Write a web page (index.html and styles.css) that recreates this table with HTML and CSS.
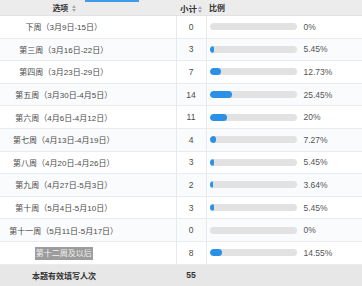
FILE: index.html
```html
<!DOCTYPE html>
<html>
<head>
<meta charset="utf-8">
<link rel="stylesheet" href="styles.css">
</head>
<body>
<div class="topmark"></div>
<table class="tbl">
  <thead>
    <tr class="head">
      <th class="c1">选项 <svg class="sort" width="4" height="7" viewBox="0 0 4 7"><path d="M0 3 L2 0 L4 3 Z M0 4 L2 7 L4 4 Z" fill="#aaa"/></svg></th>
      <th class="c2">小计<svg class="sort" width="4" height="7" viewBox="0 0 4 7"><path d="M0 3 L2 0 L4 3 Z M0 4 L2 7 L4 4 Z" fill="#aaa"/></svg></th>
      <th class="c3">比例</th>
    </tr>
  </thead>
  <tbody>
    <tr><td class="c1">下周（3月9日-15日）</td><td class="c2">0</td><td class="c3"><div class="cell"><div class="bar"><div class="fill" style="width:0%"></div></div><span class="pct">0%</span></div></td></tr>
    <tr><td class="c1">第三周（3月16日-22日）</td><td class="c2">3</td><td class="c3"><div class="cell"><div class="bar"><div class="fill" style="width:5.45%"></div></div><span class="pct">5.45%</span></div></td></tr>
    <tr><td class="c1">第四周（3月23日-29日）</td><td class="c2">7</td><td class="c3"><div class="cell"><div class="bar"><div class="fill" style="width:12.73%"></div></div><span class="pct">12.73%</span></div></td></tr>
    <tr><td class="c1">第五周（3月30日-4月5日）</td><td class="c2">14</td><td class="c3"><div class="cell"><div class="bar"><div class="fill" style="width:25.45%"></div></div><span class="pct">25.45%</span></div></td></tr>
    <tr><td class="c1">第六周（4月6日-4月12日）</td><td class="c2">11</td><td class="c3"><div class="cell"><div class="bar"><div class="fill" style="width:20%"></div></div><span class="pct">20%</span></div></td></tr>
    <tr><td class="c1">第七周（4月13日-4月19日）</td><td class="c2">4</td><td class="c3"><div class="cell"><div class="bar"><div class="fill" style="width:7.27%"></div></div><span class="pct">7.27%</span></div></td></tr>
    <tr><td class="c1">第八周（4月20日-4月26日）</td><td class="c2">3</td><td class="c3"><div class="cell"><div class="bar"><div class="fill" style="width:5.45%"></div></div><span class="pct">5.45%</span></div></td></tr>
    <tr><td class="c1">第九周（4月27日-5月3日）</td><td class="c2">2</td><td class="c3"><div class="cell"><div class="bar"><div class="fill" style="width:3.64%"></div></div><span class="pct">3.64%</span></div></td></tr>
    <tr><td class="c1">第十周（5月4日-5月10日）</td><td class="c2">3</td><td class="c3"><div class="cell"><div class="bar"><div class="fill" style="width:5.45%"></div></div><span class="pct">5.45%</span></div></td></tr>
    <tr><td class="c1">第十一周（5月11日-5月17日）</td><td class="c2">0</td><td class="c3"><div class="cell"><div class="bar"><div class="fill" style="width:0%"></div></div><span class="pct">0%</span></div></td></tr>
    <tr><td class="c1"><span class="sel">第十二周及以后</span></td><td class="c2">8</td><td class="c3"><div class="cell"><div class="bar"><div class="fill" style="width:14.55%"></div></div><span class="pct">14.55%</span></div></td></tr>
  </tbody>
  <tfoot>
    <tr class="foot"><td class="c1">本题有效填写人次</td><td class="c2">55</td><td class="c3"></td></tr>
  </tfoot>
</table>
</body>
</html>
```
FILE: styles.css
```css
html, body {
  margin: 0;
  padding: 0;
  background: #ffffff;
}
body {
  width: 362px;
  height: 286px;
  overflow: hidden;
  position: relative;
  font-family: "Liberation Sans", "Noto Sans CJK SC", sans-serif;
  color: #4a4a4a;
  font-size: 8px;
}
.topmark {
  position: absolute;
  left: 85px;
  top: 0;
  width: 54px;
  height: 2px;
  background: #3d9be9;
  z-index: 2;
}
.tbl {
  width: 410px;
  margin-left: -48px;
  border-collapse: collapse;
  table-layout: fixed;
}
.tbl td, .tbl th {
  padding: 0;
  border-bottom: 1px solid #e9ecef;
}
.c1 { width: 224px; text-align: center; border-right: 1px solid #e6eaf0; }
.c2 { width: 30px; text-align: center; border-right: 1px solid #e6eaf0; font-size: 8.5px; }
.c3 { text-align: left; }
.head th {
  height: 15px;
  background: #ececec;
  font-weight: bold;
  color: #333;
  border-right: none;
  border-bottom: 1px solid #e2e2e2;
}
.head th.c3 { padding-left: 3px; }
.sort { margin-left: 1px; vertical-align: -1px; }
tbody tr { height: 22.6px; }
tbody tr:nth-child(even) td { background: #fafbfc; }
.cell {
  display: flex;
  align-items: center;
  padding-left: 3px;
}
.bar {
  width: 87px;
  height: 7px;
  border-radius: 4px;
  background: #e2e2e2;
  overflow: hidden;
}
.fill {
  height: 100%;
  border-radius: 4px;
  background: #2a91e6;
}
.pct {
  margin-left: 7px;
  color: #555;
  font-size: 8.5px;
}
.sel {
  background: #9c9c9c;
  color: #f2f2f2;
  padding: 2px 1px;
}
.foot td {
  height: 21px;
  background: #e7e7e7;
  font-weight: bold;
  color: #333;
  border-bottom: none;
  border-right: none;
}
```
